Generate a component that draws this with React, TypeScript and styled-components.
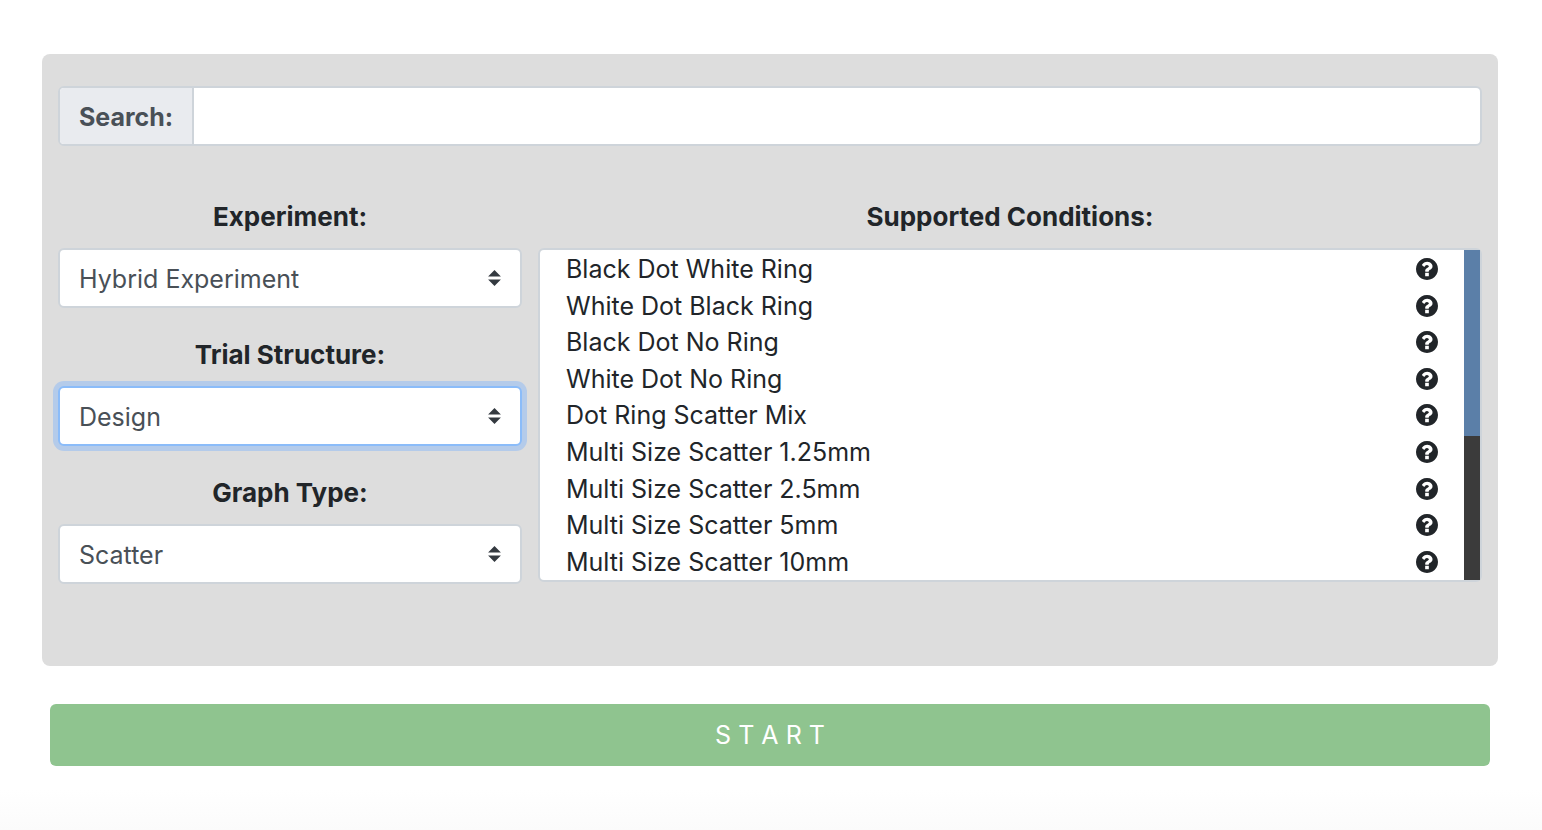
import React from "react";
import styled, { createGlobalStyle, css } from "styled-components";

const GlobalStyle = createGlobalStyle`
  *, *::before, *::after { box-sizing: border-box; }
  body {
    margin: 0;
    font-family: Inter, "Liberation Sans", sans-serif;
    font-size: 25px;
    line-height: 36px;
    color: #212529;
    background: #fff;
  }
`;

const Page = styled.main`
  min-height: 100vh;
  padding: 54px 44px 64px 42px;
  background: linear-gradient(to top, #fbfbfb, #fff 40px);
`;

const Panel = styled.section`
  padding: 32px 16px 82px;
  border-radius: 8px;
  background: #ddd;
`;

const control = css`
  border: 2px solid #ced4da;
  border-radius: 6px;
  background: #fff;
`;

const SearchGroup = styled.div`
  ${control}
  display: flex;
  height: 60px;
  margin-bottom: 52px;
  overflow: hidden;
`;

const SearchLabel = styled.label`
  display: flex;
  align-items: center;
  padding: 2px 19px 0;
  border-right: 2px solid #ced4da;
  background: #e9ebef;
  color: #495057;
  font-weight: 700;
`;

const SearchInput = styled.input`
  flex: 1;
  min-width: 0;
  padding: 2px 20px 0;
  border: 0;
  outline: 0;
  background: transparent;
  color: #495057;
  font: inherit;
`;

const Columns = styled.div`
  display: grid;
  grid-template-columns: repeat(12, minmax(0, 1fr));
  column-gap: 16px;
`;

const FieldColumn = styled.div`
  grid-column: span 4;
  display: flex;
  flex-direction: column;
  gap: 28px;
`;

const ConditionColumn = styled.div`
  grid-column: span 8;
`;

const Field = styled.div`
  display: flex;
  flex-direction: column;
`;

const heading = css`
  display: block;
  margin: 0 0 12px;
  font-size: 26px;
  line-height: 38px;
  font-weight: 700;
  text-align: center;
`;

const FieldLabel = styled.label`
  ${heading}
`;

const ConditionTitle = styled.h2`
  ${heading}
`;

const SelectWrap = styled.div`
  position: relative;
`;

const Select = styled.select<{ $active?: boolean }>`
  ${control}
  display: block;
  width: 100%;
  height: 60px;
  padding: 2px 48px 0 19px;
  appearance: none;
  outline: 0;
  color: #495057;
  font: inherit;
  ${(p) =>
    p.$active &&
    css`
      border-color: #8bbcf9;
      box-shadow: 0 0 0 5px #b4cbea;
    `}
`;

const Arrows = styled.svg`
  position: absolute;
  top: 50%;
  right: 21px;
  width: 13px;
  height: 16px;
  transform: translateY(-50%);
  fill: #343a40;
  pointer-events: none;
`;

const ConditionBox = styled.div`
  ${control}
  display: flex;
  height: 334px;
`;

const ConditionList = styled.ul`
  flex: 1;
  display: grid;
  grid-template-rows: repeat(9, 1fr);
  margin: 0;
  padding: 1px 26px 0;
  list-style: none;
`;

const Condition = styled.li`
  display: flex;
  align-items: center;
  justify-content: space-between;
  min-height: 0;
`;

const HelpButton = styled.button`
  display: flex;
  padding: 0;
  border: 0;
  background: none;
  color: #212529;
`;

const HelpIcon = styled.svg`
  width: 22px;
  height: 22px;
  fill: currentColor;
`;

const ScrollTrack = styled.div`
  width: 16px;
  background: #3b3b3b;
`;

const ScrollThumb = styled.div`
  height: 186px;
  background: #5b7fa8;
`;

const StartRow = styled.div`
  padding: 38px 8px 0;
`;

const StartButton = styled.button`
  display: block;
  width: 100%;
  height: 62px;
  border: 0;
  border-radius: 6px;
  background: #8fc48f;
  color: #fff;
  font: inherit;
`;

const fields = [
  { id: "experiment", label: "Experiment:", value: "Hybrid Experiment" },
  { id: "trial", label: "Trial Structure:", value: "Design", active: true },
  { id: "graph", label: "Graph Type:", value: "Scatter" },
];

const conditions = [
  "Black Dot White Ring",
  "White Dot Black Ring",
  "Black Dot No Ring",
  "White Dot No Ring",
  "Dot Ring Scatter Mix",
  "Multi Size Scatter 1.25mm",
  "Multi Size Scatter 2.5mm",
  "Multi Size Scatter 5mm",
  "Multi Size Scatter 10mm",
];

export default function App() {
  return (
    <>
      <GlobalStyle />
      <Page>
        <Panel>
          <SearchGroup>
            <SearchLabel htmlFor="search">Search:</SearchLabel>
            <SearchInput id="search" type="text" />
          </SearchGroup>
          <Columns>
            <FieldColumn>
              {fields.map((f) => (
                <Field key={f.id}>
                  <FieldLabel htmlFor={f.id}>{f.label}</FieldLabel>
                  <SelectWrap>
                    <Select id={f.id} $active={f.active} defaultValue={f.value}>
                      <option>{f.value}</option>
                    </Select>
                    <Arrows viewBox="0 0 4 5" aria-hidden="true">
                      <path d="M2 0L0 2h4zm0 5L0 3h4z" />
                    </Arrows>
                  </SelectWrap>
                </Field>
              ))}
            </FieldColumn>
            <ConditionColumn>
              <ConditionTitle>Supported Conditions:</ConditionTitle>
              <ConditionBox>
                <ConditionList>
                  {conditions.map((name) => (
                    <Condition key={name}>
                      <span>{name}</span>
                      <HelpButton type="button" aria-label={`About ${name}`}>
                        <HelpIcon viewBox="0 0 1536 1536" aria-hidden="true">
                          <path d="M896 1248v-192q0-14-9-23t-23-9H672q-14 0-23 9t-9 23v192q0 14 9 23t23 9h192q14 0 23-9t9-23zm256-672q0-88-55.5-163T958 297t-170-41q-243 0-371 213-15 24 8 42l132 100q7 6 19 6 16 0 25-12 53-68 86-92 34-24 86-24 48 0 85.5 26t37.5 59q0 38-20 61t-68 45q-63 28-115.5 86.5T640 892v36q0 14 9 23t23 9h192q14 0 23-9t9-23q0-19 21.5-49.5T972 829q32-18 49-28.5t46-35 44.5-48 28-60.5 12.5-81zm384 192q0 209-103 385.5T1153.5 1433 768 1536t-385.5-103T103 1153.5 0 768t103-385.5T382.5 103 768 0t385.5 103T1433 382.5 1536 768z" />
                        </HelpIcon>
                      </HelpButton>
                    </Condition>
                  ))}
                </ConditionList>
                <ScrollTrack>
                  <ScrollThumb />
                </ScrollTrack>
              </ConditionBox>
            </ConditionColumn>
          </Columns>
        </Panel>
        <StartRow>
          <StartButton type="button">S T A R T</StartButton>
        </StartRow>
      </Page>
    </>
  );
}
